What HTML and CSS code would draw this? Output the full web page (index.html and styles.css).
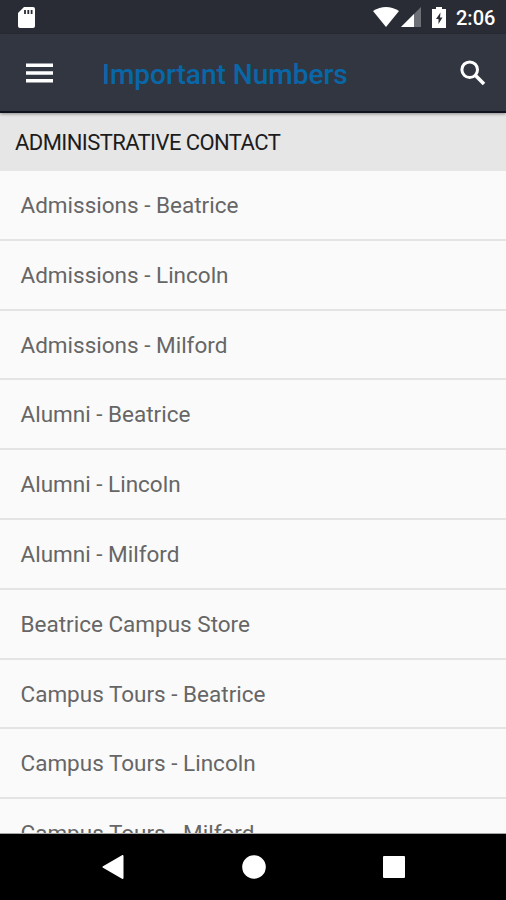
FILE: index.html
```html
<!DOCTYPE html>
<html lang="en">
<head>
<meta charset="utf-8">
<title>Important Numbers</title>
<link rel="stylesheet" href="styles.css">
</head>
<body>
<div class="screen">
  <div class="status-bar">
    <svg class="sd-icon" width="17" height="21" viewBox="0 0 17 21"><path fill="#fff" d="M6 0H15Q17 0 17 2V19Q17 21 15 21H2Q0 21 0 19V6Z"/><path stroke="#292c35" stroke-width="1.8" d="M7 3v4M10.3 3v4M13.6 3v4"/></svg>
    <svg class="wifi-icon" width="26" height="20" viewBox="0 0 26 20"><path fill="#fff" d="M0 4Q13-4 26 4L13 20Z"/></svg>
    <svg class="signal-icon" width="20" height="20" viewBox="0 0 20 20"><path fill="#6d7076" d="M20 0V20H0Z"/><path fill="#fff" d="M13 7V20H0Z"/></svg>
    <svg class="battery-icon" width="14" height="21" viewBox="0 0 14 21"><path fill="#fff" d="M4 0h6v2h4v19H0V2h4Z"/><path fill="#292c35" d="M8.5 5.5 4 12H6.5V17L10.5 10.5H8Z"/></svg>
    <span class="clock">2:06</span>
  </div>
  <header class="app-bar">
    <svg class="menu-icon" width="27" height="20" viewBox="0 0 27 20"><path fill="#fff" d="M0 0.5h27v3.5H0zM0 8.2h27v3.5H0zM0 16h27v3.5H0z"/></svg>
    <h1 class="title">Important Numbers</h1>
    <svg class="search-icon" width="26" height="26" viewBox="0 0 26 26" fill="none" stroke="#fff"><circle cx="9.7" cy="9.7" r="7.8" stroke-width="3"/><path d="M15.3 15.3 24 24" stroke-width="3.6"/></svg>
  </header>
  <main class="content">
    <h2 class="section">ADMINISTRATIVE CONTACT</h2>
    <ul class="list">
      <li class="row">Admissions - Beatrice</li>
      <li class="row">Admissions - Lincoln</li>
      <li class="row">Admissions - Milford</li>
      <li class="row">Alumni - Beatrice</li>
      <li class="row">Alumni - Lincoln</li>
      <li class="row">Alumni - Milford</li>
      <li class="row">Beatrice Campus Store</li>
      <li class="row">Campus Tours - Beatrice</li>
      <li class="row">Campus Tours - Lincoln</li>
      <li class="row">Campus Tours - Milford</li>
    </ul>
  </main>
  <nav class="nav-bar">
    <svg width="22" height="24" viewBox="0 0 22 24"><path fill="#fff" stroke="#fff" stroke-width="2" stroke-linejoin="round" d="M20.5 1V23L1.5 12Z"/></svg>
    <svg width="24" height="24" viewBox="0 0 24 24"><circle cx="12" cy="12" r="11.8" fill="#fff"/></svg>
    <svg width="22" height="22" viewBox="0 0 22 22"><rect width="22" height="22" rx="1" fill="#fff"/></svg>
  </nav>
</div>
</body>
</html>
```
FILE: styles.css
```css
* { box-sizing: border-box; }
body { margin: 0; font-family: Roboto, sans-serif; }
.screen { display: flex; flex-direction: column; width: 506px; height: 900px; overflow: hidden; background: #fafafa; }
.status-bar { flex: none; display: flex; align-items: flex-start; height: 34px; padding: 7px 11px 0 18px; background: #292c35; }
.wifi-icon { margin-left: auto; }
.signal-icon { margin-left: 2px; }
.battery-icon { margin-left: 11px; }
.clock { width: 39px; margin-left: 10px; color: #fff; font-size: 20px; font-weight: 500; line-height: 22px; white-space: nowrap; }
.app-bar { position: relative; z-index: 1; flex: none; display: flex; align-items: center; height: 79px; padding: 0 20px 0 26px; background: #323641; border-bottom: 2px solid #11121f; box-shadow: 0 1px 3px rgba(0, 0, 0, 0.4); }
.title { flex: 1; margin: 4px 0 0 49px; color: #0967a8; font-size: 28px; font-weight: 500; line-height: 36px; white-space: nowrap; }
.content { flex: none; height: 721px; overflow: hidden; border-bottom: 1px solid #a5a5a5; }
.section { margin: 0; height: 58px; padding-left: 15px; background: #e6e6e6; color: #1c1c1c; font-size: 22px; font-weight: 400; letter-spacing: -0.58px; line-height: 59px; white-space: nowrap; }
.list { margin: 0; padding: 0; list-style: none; }
.row { height: 69.8px; padding-left: 20.5px; border-bottom: 2px solid #e4e4e4; color: #666; font-size: 22.5px; line-height: 69.8px; white-space: nowrap; }
.nav-bar { flex: 1; display: flex; align-items: center; justify-content: space-between; padding: 0 101px 0 102px; background: #000; }
```
